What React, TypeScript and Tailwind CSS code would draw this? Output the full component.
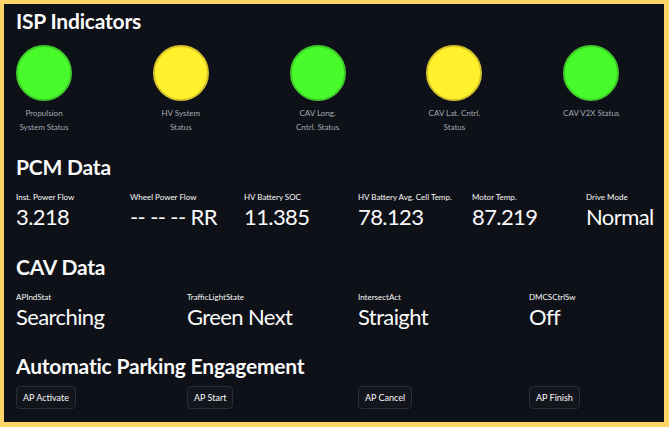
const font = { fontFamily: "Lato, 'Liberation Sans', sans-serif" };

type Lamp = { lines: string[]; color: "green" | "yellow" };

const lamps: Lamp[] = [
  { lines: ["Propulsion", "System Status"], color: "green" },
  { lines: ["HV System", "Status"], color: "yellow" },
  { lines: ["CAV Long.", "Cntrl. Status"], color: "green" },
  { lines: ["CAV Lat. Cntrl.", "Status"], color: "yellow" },
  { lines: ["CAV V2X Status"], color: "green" },
];

const pcm = [
  { label: "Inst. Power Flow", value: "3.218" },
  { label: "Wheel Power Flow", value: "-- -- -- RR" },
  { label: "HV Battery SOC", value: "11.385" },
  { label: "HV Battery Avg. Cell Temp.", value: "78.123" },
  { label: "Motor Temp.", value: "87.219" },
  { label: "Drive Mode", value: "Normal" },
];

const cav = [
  { label: "APIndStat", value: "Searching" },
  { label: "TrafficLightState", value: "Green Next" },
  { label: "IntersectAct", value: "Straight" },
  { label: "DMCSCtrlSw", value: "Off" },
];

const buttons = ["AP Activate", "AP Start", "AP Cancel", "AP Finish"];

const Heading = ({ children, className }: { children: string; className: string }) => (
  <h2 className={`text-[21px] font-bold leading-[28px] tracking-[-0.2px] text-[#fafafa] ${className}`}>
    {children}
  </h2>
);

const Metric = ({ label, value }: { label: string; value: string }) => (
  <div className="flex flex-col whitespace-nowrap">
    <span className="text-[8px] leading-[12px] text-[#fafafa]">{label}</span>
    <span className="text-[22px] leading-[28px] tracking-[-0.6px] text-[#fafafa]">{value}</span>
  </div>
);

export default function App() {
  return (
    <div
      style={font}
      className="w-[669px] h-[427px] overflow-hidden bg-[#fdd566] pt-[4px] pl-[4px] pr-[5px] pb-[5px]"
    >
      <div className="h-full bg-[#0e1117] px-[12px] pt-[3px]">
        <Heading className="">ISP Indicators</Heading>

        <div className="mt-[10px] grid w-[637px] grid-cols-5 gap-x-[47px]">
          {lamps.map((l) => (
            <div key={l.lines.join(" ")} className="flex w-[56px] flex-col items-center">
              <div
                className={
                  l.color === "green"
                    ? "h-[56px] w-[56px] rounded-full border-2 border-[#3fc92b] bg-[#48fc2c]"
                    : "h-[56px] w-[56px] rounded-full border-2 border-[#d6c22a] bg-[#fff22c]"
                }
              />
              <div className="mt-[5px] flex flex-col items-center whitespace-nowrap text-[8px] leading-[14px] text-[#a3a8b4]">
                {l.lines.map((t) => (
                  <span key={t}>{t}</span>
                ))}
              </div>
            </div>
          ))}
        </div>

        <Heading className="mt-[19px]">PCM Data</Heading>
        <div className="mt-[10px] grid w-[637px] grid-cols-6 gap-x-[47px]">
          {pcm.map((m) => (
            <Metric key={m.label} {...m} />
          ))}
        </div>

        <Heading className="mt-[22px]">CAV Data</Heading>
        <div className="mt-[10px] grid w-[637px] grid-cols-4 gap-x-[47px]">
          {cav.map((m) => (
            <Metric key={m.label} {...m} />
          ))}
        </div>

        <Heading className="mt-[21px]">Automatic Parking Engagement</Heading>
        <div className="mt-[3px] grid w-[637px] grid-cols-4 gap-x-[47px]">
          {buttons.map((b) => (
            <div key={b}>
              <button className="h-[23px] rounded-[4px] border border-[#2b2e36] bg-[#12151c] px-[6px] text-[9px] text-[#fafafa]">
                {b}
              </button>
            </div>
          ))}
        </div>
      </div>
    </div>
  );
}
